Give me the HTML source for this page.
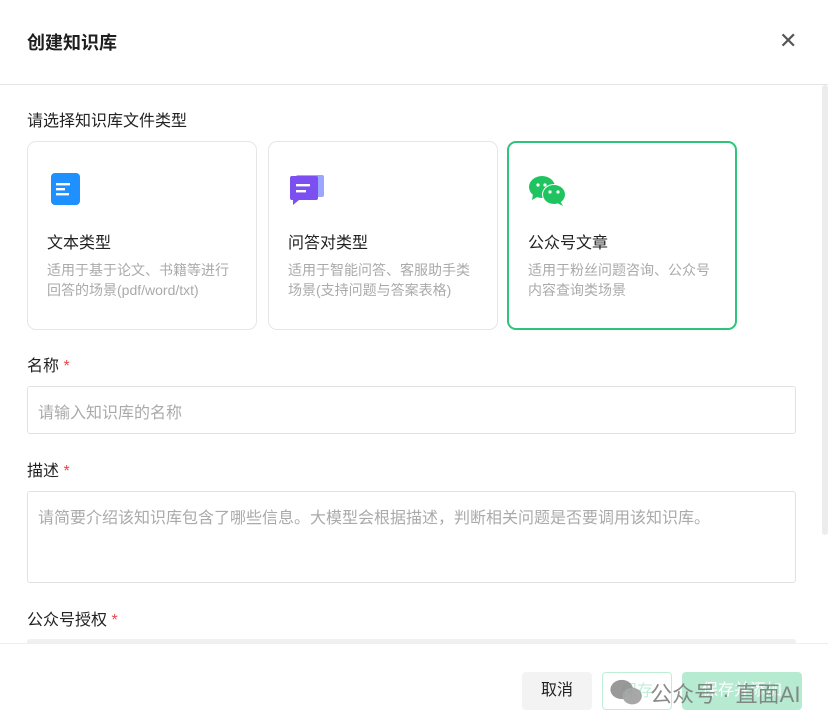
<!DOCTYPE html>
<html><head><meta charset="utf-8"><style>
*{box-sizing:border-box;margin:0;padding:0}
body{width:828px;height:728px;background:#fff;font-family:"Liberation Sans","Noto Sans CJK SC",sans-serif;position:relative;overflow:hidden;color:#222}
.a{position:absolute}
.title{left:27px;top:29px;font-size:18px;font-weight:bold;color:#1f1f1f}
.x{left:779px;top:28px;font-size:22px;color:#555}
.hline{left:0;top:84px;width:828px;height:1px;background:#e5e5e5}
.lbl{font-size:16px;color:#222;left:27px}
.card{top:141px;width:230px;height:189px;border:1px solid #e6e6e6;border-radius:9px}
.card.sel{border:2px solid #2cc57a}
.ct{position:absolute;left:19px;top:87px;font-size:16px;color:#222}
.cd{position:absolute;left:19px;top:118px;font-size:14px;line-height:20px;color:#aaa;width:190px}
.card.sel .ct{top:86px}
.card.sel .cd{top:117px}
.ico{position:absolute;left:23px;top:31px}
.inp{left:27px;width:769px;border:1px solid #e2e2e2;border-radius:3px;font-size:16px;color:#aaa;padding:12px 10px}
.star{color:#e5484d}
.btn{top:672px;height:38px;border-radius:4px;font-size:16px;text-align:center;line-height:38px}
</style></head><body>
<div class="a title">创建知识库</div>
<div class="a x">✕</div>
<div class="a hline"></div>
<div class="a" style="left:822px;top:85px;width:6px;height:450px;background:#ececec;border-radius:3px"></div>
<div class="a lbl" style="top:107px">请选择知识库文件类型</div>

<div class="a card" style="left:27px">
<svg class="ico" width="30" height="34" viewBox="0 0 30 34" style="left:23px;top:31px"><rect x="0" y="0" width="29" height="32" rx="4" fill="#1e90ff"/><rect x="5" y="10" width="14" height="2.4" fill="#fff"/><rect x="5" y="15" width="9" height="2.4" fill="#fff"/><rect x="5" y="20" width="13" height="2.4" fill="#fff"/></svg>
<div class="ct">文本类型</div>
<div class="cd">适用于基于论文、书籍等进行回答的场景(pdf/word/txt)</div>
</div>
<div class="a card" style="left:268px">
<svg class="ico" width="36" height="34" viewBox="0 0 36 34" style="left:21px;top:33px"><rect x="6" y="0" width="28" height="22" rx="2" fill="#9aa6ff"/><path d="M0 3a2 2 0 0 1 2-2h24a2 2 0 0 1 2 2v20a2 2 0 0 1-2 2H9l-6 5v-5H2a2 2 0 0 1-2-2z" fill="#7b4ff0"/><rect x="6" y="9" width="14" height="2.4" fill="#fff"/><rect x="6" y="15" width="10" height="2.4" fill="#fff"/></svg>
<div class="ct">问答对类型</div>
<div class="cd">适用于智能问答、客服助手类场景(支持问题与答案表格)</div>
</div>
<div class="a card sel" style="left:507px">
<svg class="ico" width="38" height="32" viewBox="0 0 38 32" style="left:20px;top:32px"><ellipse cx="13" cy="12" rx="13" ry="11" fill="#1fc461"/><path d="M4 19l-1 6 7-4z" fill="#1fc461"/><circle cx="9" cy="10" r="1.6" fill="#fff"/><circle cx="16" cy="10" r="1.6" fill="#fff"/><ellipse cx="25" cy="19.5" rx="12" ry="10.5" fill="#fff"/><ellipse cx="25" cy="19.5" rx="11" ry="9.5" fill="#1fc461"/><path d="M31 26l3 5-8-4z" fill="#1fc461"/><circle cx="21" cy="17" r="1.6" fill="#fff"/><circle cx="29" cy="17" r="1.6" fill="#fff"/></svg>
<div class="ct">公众号文章</div>
<div class="cd">适用于粉丝问题咨询、公众号内容查询类场景</div>
</div>

<div class="a lbl" style="top:352px">名称 <span class="star">*</span></div>
<div class="a inp" style="top:386px;height:48px">请输入知识库的名称</div>
<div class="a lbl" style="top:457px">描述 <span class="star">*</span></div>
<div class="a inp" style="top:491px;height:92px">请简要介绍该知识库包含了哪些信息。大模型会根据描述，判断相关问题是否要调用该知识库。</div>
<div class="a lbl" style="top:606px">公众号授权 <span class="star">*</span></div>
<div class="a" style="left:27px;top:639px;width:769px;height:6px;background:#f0f0f0;border-radius:3px"></div>
<div class="a" style="left:0;top:643px;width:828px;height:1px;background:#eee"></div>
<div class="a" style="left:0;top:644px;width:828px;height:84px;background:#fff"></div>

<div class="a btn" style="left:522px;width:70px;background:#f3f3f3;color:#222">取消</div>
<div class="a btn" style="left:602px;width:70px;border:1px solid #bfeed6;color:#bfeed6">保存</div>
<div class="a btn" style="left:682px;width:120px;background:#b6ebd2;color:#fff">保存并添加</div>
<div class="a" style="left:610px;top:677px;font-size:22px;color:#777;opacity:.85;white-space:nowrap">
<svg width="34" height="28" viewBox="0 0 38 32" style="vertical-align:-5px"><ellipse cx="13" cy="12" rx="13" ry="11" fill="#888"/><ellipse cx="25" cy="19.5" rx="11" ry="9.5" fill="#999"/></svg> 公众号 · 直面AI</div>
</body></html>
